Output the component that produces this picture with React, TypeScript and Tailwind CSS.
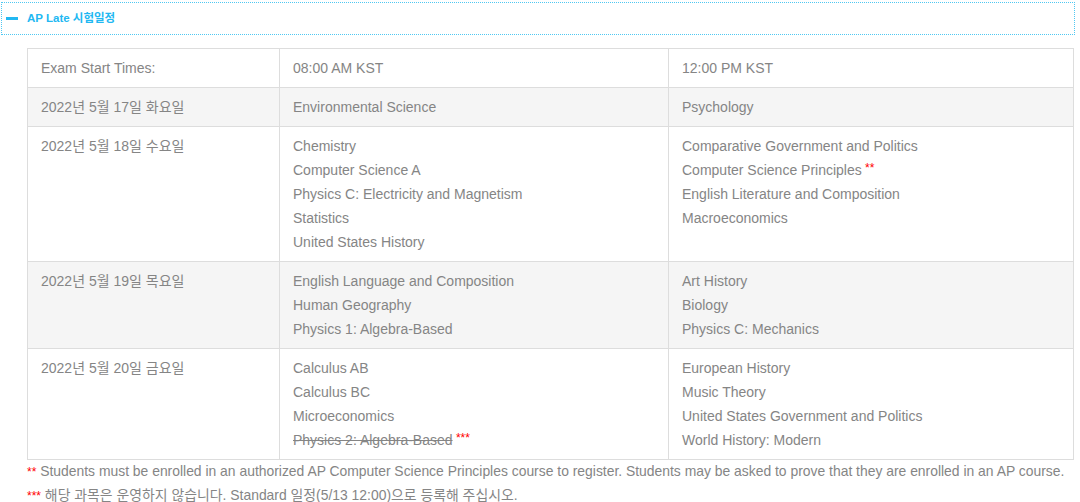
const FONT = { fontFamily: '"Liberation Sans", Arial, "Noto Sans CJK KR", sans-serif' };

type Row = { date: string; am: React.ReactNode[]; pm: React.ReactNode[]; striped?: boolean };

const Star = ({ n }: { n: number }) => (
  <span className="text-[#ff0000] text-[12px] align-top leading-[20px]"> {"*".repeat(n)}</span>
);

const ROWS: Row[] = [
  { date: "2022년 5월 17일 화요일", am: ["Environmental Science"], pm: ["Psychology"], striped: true },
  {
    date: "2022년 5월 18일 수요일",
    am: ["Chemistry", "Computer Science A", "Physics C: Electricity and Magnetism", "Statistics", "United States History"],
    pm: [
      "Comparative Government and Politics",
      <>Computer Science Principles<Star n={2} /></>,
      "English Literature and Composition",
      "Macroeconomics",
    ],
  },
  {
    date: "2022년 5월 19일 목요일",
    am: ["English Language and Composition", "Human Geography", "Physics 1: Algebra-Based"],
    pm: ["Art History", "Biology", "Physics C: Mechanics"],
    striped: true,
  },
  {
    date: "2022년 5월 20일 금요일",
    am: [
      "Calculus AB",
      "Calculus BC",
      "Microeconomics",
      <><span className="line-through">Physics 2: Algebra-Based</span><Star n={3} /></>,
    ],
    pm: ["European History", "Music Theory", "United States Government and Politics", "World History: Modern"],
  },
];

function Cell({ children }: { children: React.ReactNode }) {
  return <td className="border border-[#dddddd] px-[13px] py-[7px] align-top">{children}</td>;
}

export default function App() {
  return (
    <div className="bg-white w-[1080px] h-[502px] overflow-hidden text-[#858585]" style={FONT}>
      <div className="ml-[1px] mt-[2px] mr-[5px] h-[33px] border border-dotted border-[#4fc8f2] flex items-center gap-[9px] pl-[4px]">
        <span className="block w-[12px] h-[3px] bg-[#22b8f2]" />
        <span className="text-[11.5px] font-bold text-[#22b8f2]">AP Late 시험일정</span>
      </div>

      <div className="pl-[27px] pr-[6px] pt-[13px]">
        <table className="w-[1047px] border-collapse border border-[#dddddd] text-[14px] leading-[24px]">
          <colgroup>
            <col className="w-[252px]" />
            <col className="w-[389px]" />
            <col />
          </colgroup>
          <tbody>
            <tr>
              <Cell>Exam Start Times:</Cell>
              <Cell>08:00 AM KST</Cell>
              <Cell>12:00 PM KST</Cell>
            </tr>
            {ROWS.map(r => (
              <tr key={r.date} className={r.striped ? "bg-[#f5f5f5]" : ""}>
                <Cell>{r.date}</Cell>
                <Cell>{r.am.map((x, i) => <div key={i}>{x}</div>)}</Cell>
                <Cell>{r.pm.map((x, i) => <div key={i}>{x}</div>)}</Cell>
              </tr>
            ))}
          </tbody>
        </table>

        <div className="text-[13.9px] leading-[23px] whitespace-nowrap">
          <p><span className="text-[#ff0000] text-[12px]">**</span> Students must be enrolled in an authorized AP Computer Science Principles course to register. Students may be asked to prove that they are enrolled in an AP course.</p>
          <p><span className="text-[#ff0000] text-[12px]">***</span> 해당 과목은 운영하지 않습니다. Standard 일정(5/13 12:00)으로 등록해 주십시오.</p>
        </div>
      </div>
    </div>
  );
}
